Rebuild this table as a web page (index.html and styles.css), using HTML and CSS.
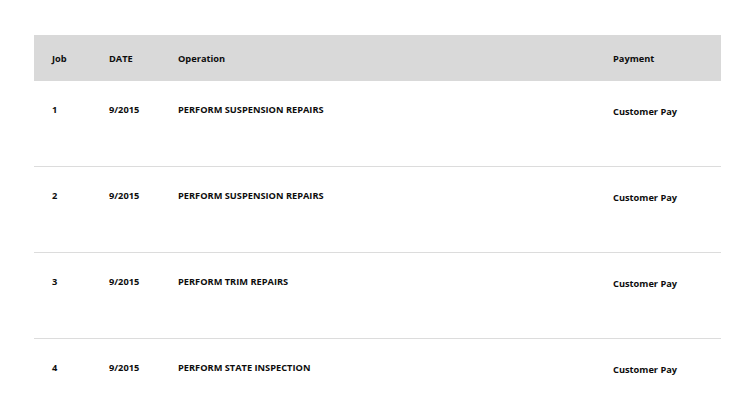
FILE: index.html
```html
<!DOCTYPE html>
<html lang="en">
<head>
<meta charset="utf-8">
<title>Jobs</title>
<link rel="stylesheet" href="styles.css">
</head>
<body>
<div class="page">
  <div class="table">
    <div class="row head">
      <div class="cell">Job</div>
      <div class="cell">DATE</div>
      <div class="cell">Operation</div>
      <div class="cell">Payment</div>
    </div>
    <div class="row">
      <div class="cell">1</div>
      <div class="cell">9/2015</div>
      <div class="cell">PERFORM SUSPENSION REPAIRS</div>
      <div class="cell pay">Customer Pay</div>
    </div>
    <div class="row">
      <div class="cell">2</div>
      <div class="cell">9/2015</div>
      <div class="cell">PERFORM SUSPENSION REPAIRS</div>
      <div class="cell pay">Customer Pay</div>
    </div>
    <div class="row">
      <div class="cell">3</div>
      <div class="cell">9/2015</div>
      <div class="cell">PERFORM TRIM REPAIRS</div>
      <div class="cell pay">Customer Pay</div>
    </div>
    <div class="row">
      <div class="cell">4</div>
      <div class="cell">9/2015</div>
      <div class="cell">PERFORM STATE INSPECTION</div>
      <div class="cell pay">Customer Pay</div>
    </div>
  </div>
</div>
</body>
</html>
```
FILE: styles.css
```css
html, body {
  margin: 0;
  padding: 0;
  background: #ffffff;
}
body {
  font-family: "Open Sans", "Liberation Sans", sans-serif;
  font-weight: 700;
  font-size: 9.25px;
  line-height: 12px;
  color: #0d0d0d;
  overflow: hidden;
}
.page {
  padding: 35px 30px 0 34px;
}
.table {
  width: 687px;
}
.row {
  display: grid;
  grid-template-columns: 57px 69px 435px 1fr;
  padding-left: 18px;
  height: 85px;
  border-bottom: 1px solid #dcdcdc;
  box-sizing: content-box;
}
.row .cell {
  padding-top: 23px;
}
.row .cell.pay {
  padding-top: 25px;
}
.row.head {
  height: 46px;
  background: #d9d9d9;
  border-bottom: none;
}
.row.head .cell {
  padding-top: 18px;
}
```
